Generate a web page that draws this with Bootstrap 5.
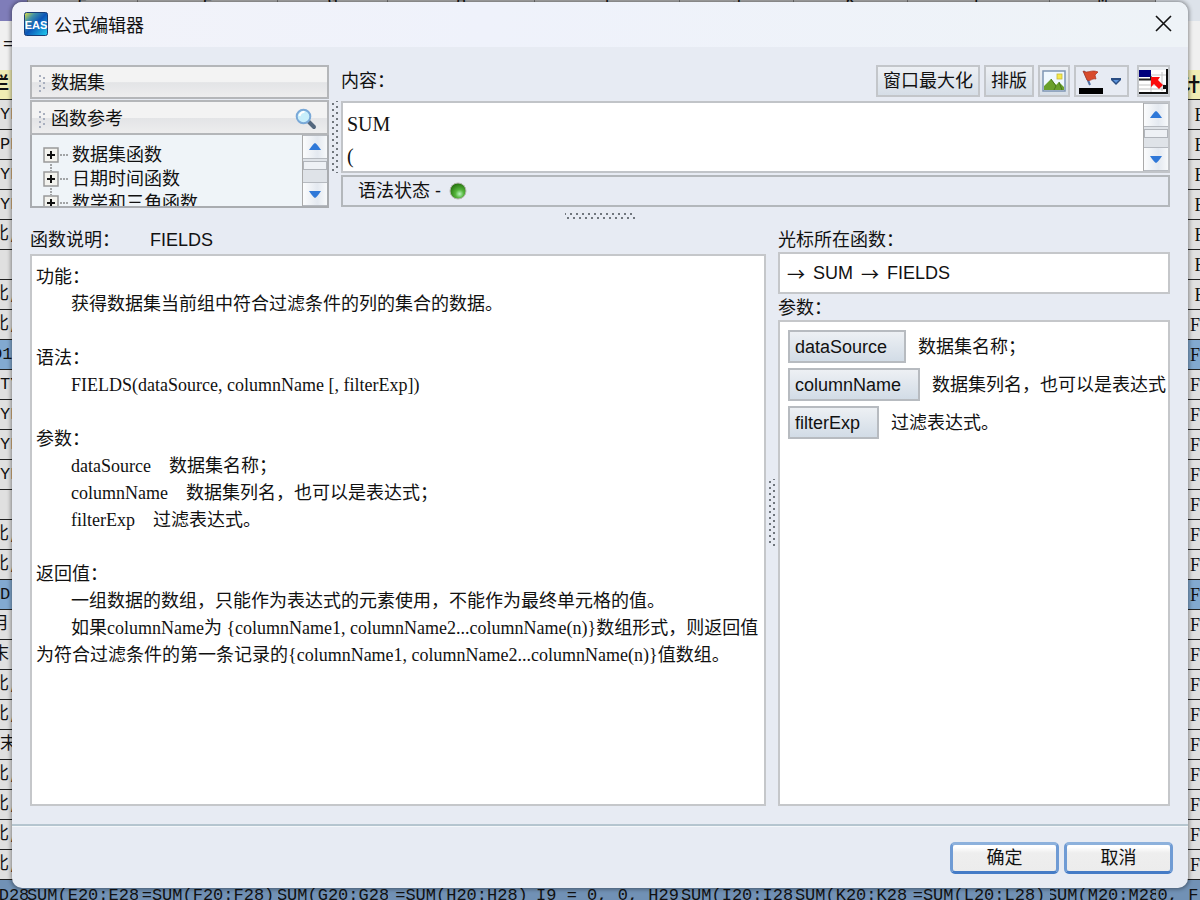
<!DOCTYPE html>
<html lang="zh-CN">
<head>
<meta charset="utf-8">
<meta name="viewport" content="width=device-width, initial-scale=1">
<title>公式编辑器</title>
<link href="https://cdn.jsdelivr.net/npm/bootstrap@5.3.0/dist/css/bootstrap.min.css" rel="stylesheet">
<style>
  :root { --ui: "Liberation Sans", "Noto Sans CJK SC", sans-serif; --doc: "Liberation Serif", "Noto Sans CJK SC", serif; --edge: #c1c4c8; --edge-dark: #a9acb0; --face: #e7ebf3; }
  body { font-family: var(--ui); font-size: 18px; line-height: 24px; color: #111; background: #dedede; }
  button { font: inherit; color: inherit; }

  /* worksheet behind the dialog */
  .sheet { inset: 0; font-family: "Liberation Mono", "Noto Sans CJK SC", monospace; font-size: 17px; line-height: 30px; }
  .sheet > div { flex-shrink: 0; }
  .sheet-cols { display: grid; grid-template-columns: 28px 110px 140px 110px 147px 145px 114px 114px 142px 106px 1fr; }
  .sheet-cols > div { display: flex; justify-content: center; overflow: hidden; white-space: pre; min-width: 0; }
  .sheet-head { height: 21px; background: #b4b4b4; border-bottom: 1px solid #777; }
  .sheet-head > div { border-right: 1px solid #777; line-height: 8px; height: 21px; padding-bottom: 16px; align-items: flex-end; }
  .sheet-head > div:first-child { background: #7f7db9; }
  .sheet-head > div:last-child { background: #dde3ea; border: 0; }
  .sheet-formula { height: 49px; background: #f0f0f0; line-height: 48px; padding-left: 3px; }
  .strip { width: 14px; }
  .strip > div { height: 30px; border-bottom: 1px solid #222; background: #e0e0e0; overflow: hidden; white-space: pre; }
  .strip > .key { background: #f1edb4; font-weight: bold; }
  .strip > .sel, .sheet-foot { background: #82a9d0; }
  .strip .half { text-indent: -8px; }
  .strip-r { font-family: "Liberation Serif", "Noto Sans CJK SC", serif; font-size: 18px; }
  .strip-r > div { padding-left: 4px; }
  .sheet-foot { height: 30px; line-height: 32px; background: #7191b5; }

  /* dialog */
  .dlg { inset: 2px 12px 12px; background: var(--face); border-radius: 10px; box-shadow: 0 0 4px 1px rgba(0,0,0,.42); overflow: hidden; }
  .dlg-title { height: 45px; padding: 0 16px 2px 12px; gap: 6px; background: linear-gradient(90deg, #f2f3f9, #eff2fb 40%, #eef3f7); }
  .dlg-title h1 { font: 18px/24px "Noto Sans CJK SC", sans-serif; }
  .plain { border: 0; background: none; padding: 0; display: flex; }
  .dlg-main { padding: 18px 18px 18px; }
  .side { width: 299px; }
  .fold { height: 34px; border: 2px solid #b4b6b9; background: linear-gradient(#f3f3f3 50%, #e3e4e6 52%, #ededee); padding: 2px 10px 0 6px; text-align: left; }
  .fold + .fold { margin-top: 1px; height: 35px; }
  .tree-box { border: 2px solid var(--edge-dark); border-top: 0; background: #eff4f8; height: 73px; overflow: hidden; }
  .tree { padding: 8px 0 0 11px; }
  .tree li { height: 24px; white-space: nowrap; }
  .tree li svg { flex: none; overflow: visible; }
  .bar { width: 25px; border-left: 1px solid #aaa; background: #dfe3e8; flex: none; }
  .bar button { height: 24px; border: 1px solid #b6bac0; border-width: 1px 0; background: linear-gradient(90deg, #fbfcfd, #e4e9f0 60%, #f7f9fb); align-items: center; justify-content: center; }
  .bar .thumb { height: 9px; margin-top: 2px; border: 1px solid #b1b5bb; background: #eef1f5; }
  .dots-v { width: 8px; margin: auto 2px; background: radial-gradient(circle, #70767d 1px, transparent 1px) 0 0/4px 6px, radial-gradient(circle, #70767d 1px, transparent 1px) 4px 3px/4px 6px; background-repeat: repeat-y; }
  .dots-h { height: 8px; width: 70px; background: radial-gradient(circle, #70767d 1px, transparent 1px) 3px 0/6px 4px, radial-gradient(circle, #70767d 1px, transparent 1px) 0 4px/6px 4px; background-repeat: repeat-x; }
  .tool { height: 32px; border: 2px solid #c3c6ca; background: linear-gradient(#edf0f4, #d6dee7); padding: 0 5px; display: flex; align-items: center; }
  .tool.pic { padding: 0 2px; }
  .tool.flat { background: var(--face); }
  .edit-box { height: 72px; border: 2px solid var(--edge); background: #fff; }
  .edit-box textarea { border: 0; outline: 0; resize: none; overflow: hidden; padding: 5px 4px 0; font: 20px/32px var(--doc); color: #111; height: 68px; }
  .status { height: 32px; border: 2px solid #b3b7bb; padding-left: 15px; margin-top: 2px; }
  .well { border: 2px solid #c5c7ca; background: #fff; }
  .doc { font-family: var(--doc); line-height: 27px; padding: 8px 4px; white-space: pre-wrap; overflow: hidden; }
  .doc dt { font-weight: normal; }
  .doc dd { margin: 0 0 27px; padding-left: 35px; white-space: pre; }
  .doc .outdent { margin-left: -35px; }
  .pane-r { width: 392px; flex: none; }
  .pane-label { padding: 8px 0 2px; }
  .trail { height: 42px; padding: 0 7px; gap: 8px; }
  .trail i { font-family: "Noto Sans CJK SC", sans-serif; font-style: normal; }
  .args-label { padding: 2px 0 0; }
  .args { padding: 8px 0 0 8px; overflow: hidden; }
  .args li { display: flex; align-items: center; gap: 12px; height: 33px; margin-bottom: 5px; white-space: nowrap; }
  .args button { height: 33px; border: 2px solid #b7bbc0; background: linear-gradient(#edf0f4, #d2dce6); padding: 0 17px 0 5px; flex: none; }
  .dlg-foot { height: 64px; border-top: 2px solid #b5c5cf; box-shadow: inset 0 1px #f4f7fa; padding: 2px 15px 0; gap: 5px; }
  .dlg-foot button { width: 109px; height: 32px; border: 3px solid; border-color: #8db1dc #6f9bd4 #447bc6 #6f9bd4; border-radius: 5px; background: linear-gradient(#fff 2px, #eee 8px, #ececec); padding: 0; }
</style>
</head>
<body class="vh-100 position-relative overflow-hidden">

<div class="sheet position-absolute d-flex flex-column overflow-hidden" aria-hidden="true">
  <div class="sheet-head sheet-cols"><div></div><div>E</div><div>F</div><div>G</div><div>H</div><div>I</div><div>J</div><div>K</div><div>L</div><div>M</div><div></div></div>
  <div class="sheet-formula">=</div>
  <div class="d-flex justify-content-between">
    <div class="strip">
      <div class="key half">栏</div>
      <div>YF</div><div>PF</div><div>YF</div><div>YF</div><div class="half">比,</div><div> .</div><div class="half">比,</div><div class="half">比,</div>
      <div class="sel half">D1</div><div>TY</div><div>YF</div><div>YF</div><div>YF</div><div> .</div><div class="half">比,</div><div class="half">比,</div>
      <div class="sel">D</div><div class="half">月</div><div class="half">末</div><div class="half">比,</div><div class="half">比,</div><div>末</div><div class="half">比,</div><div class="half">比,</div><div class="half">比,</div><div class="half">比,</div>
    </div>
    <div class="strip strip-r">
      <div class="key half">计</div>
      <div> F</div><div> F</div><div> F</div><div> F</div><div> F</div><div> F</div><div> F</div><div>F</div>
      <div class="sel">F</div><div>F</div><div>F</div><div>F</div><div>F</div><div>F</div><div>F</div><div>F</div>
      <div class="sel">F</div><div>F</div><div>F</div><div>F</div><div>F</div><div>F</div><div>F</div><div>F</div><div>F</div><div>F</div>
    </div>
  </div>
  <div class="sheet-foot sheet-cols"><div>D28</div><div>=SUM(E20:E28)</div><div>=SUM(F20:F28)</div><div>=SUM(G20:G28)</div><div>=SUM(H20:H28)</div><div>I9 = 0, 0, H29</div><div>=SUM(I20:I28)</div><div>=SUM(K20:K28)</div><div>=SUM(L20:L28)</div><div>=SUM(M20:M28)</div><div>0, F</div></div>
</div>

<main class="dlg position-absolute d-flex flex-column" role="dialog" aria-labelledby="dlg-name">
  <header class="dlg-title d-flex align-items-center">
    <svg width="24" height="24" viewBox="0 0 24 24" aria-hidden="true">
      <defs><linearGradient id="lg" x1="0" y1="0" x2="1" y2="1"><stop offset="0" stop-color="#e8e337"/><stop offset=".25" stop-color="#3e8fa8"/><stop offset=".5" stop-color="#0c55b8"/><stop offset="1" stop-color="#20d0f0"/></linearGradient></defs>
      <rect x=".5" y=".5" width="23" height="23" rx="2" fill="url(#lg)" stroke="#173d78"/>
      <text x="12" y="17" text-anchor="middle" font-family="Liberation Sans, sans-serif" font-size="11" font-weight="bold" fill="#fff">EAS</text>
    </svg>
    <h1 id="dlg-name" class="m-0 flex-grow-1">公式编辑器</h1>
    <button class="plain" type="button" aria-label="关闭"><svg width="17" height="17" viewBox="0 0 17 17"><path d="M1 1 16 16M16 1 1 16" stroke="#111" stroke-width="1.6"/></svg></button>
  </header>

  <div class="dlg-main d-flex flex-column flex-grow-1">
    <section class="d-flex">
      <div class="side d-flex flex-column">
        <button class="fold d-flex align-items-center gap-1" type="button">
          <svg width="9" height="18" viewBox="0 0 9 18"><path d="M2 1v17M6 3v15" stroke="#a8afbe" stroke-width="2" stroke-dasharray="2 3"/></svg><span>数据集</span></button>
        <button class="fold d-flex align-items-center gap-1" type="button">
          <svg width="9" height="18" viewBox="0 0 9 18"><path d="M2 1v17M6 3v15" stroke="#a8afbe" stroke-width="2" stroke-dasharray="2 3"/></svg><span class="flex-grow-1">函数参考</span>
          <svg width="22" height="22" viewBox="0 0 22 22"><path d="m13.500 13.500 5.500 5.500" stroke="#53677d" stroke-width="4" stroke-linecap="round"/><circle cx="8.500" cy="8.500" r="6.800" fill="#c8eefb" stroke="#7aa9d8" stroke-width="2"/><path d="M4.500 8c.5-3 3-4.500 5-4" stroke="#fff" stroke-width="2" fill="none"/></svg></button>
        <div class="tree-box d-flex">
          <ul class="tree list-unstyled m-0 flex-grow-1">
            <li class="d-flex align-items-center gap-1"><button class="plain" type="button" aria-label="展开"><svg width="25" height="16" viewBox="0 0 25 16"><rect x="1" y="1" width="14" height="14" fill="#f3f3ee" stroke="#999" stroke-width="1.500"/><path d="M4 8h8M8 4v8" stroke="#111" stroke-width="2"/><path d="M17 8h8M8 17v7" stroke="#555" stroke-dasharray="2 1"/></svg></button>数据集函数</li>
            <li class="d-flex align-items-center gap-1"><button class="plain" type="button" aria-label="展开"><svg width="25" height="16" viewBox="0 0 25 16"><rect x="1" y="1" width="14" height="14" fill="#f3f3ee" stroke="#999" stroke-width="1.500"/><path d="M4 8h8M8 4v8" stroke="#111" stroke-width="2"/><path d="M17 8h8M8 17v7" stroke="#555" stroke-dasharray="2 1"/></svg></button>日期时间函数</li>
            <li class="d-flex align-items-center gap-1"><button class="plain" type="button" aria-label="展开"><svg width="25" height="16" viewBox="0 0 25 16"><rect x="1" y="1" width="14" height="14" fill="#f3f3ee" stroke="#999" stroke-width="1.500"/><path d="M4 8h8M8 4v8" stroke="#111" stroke-width="2"/><path d="M17 8h8" stroke="#555" stroke-dasharray="2 1"/></svg></button>数学和三角函数</li>
          </ul>
          <div class="bar d-flex flex-column">
            <button class="plain" type="button" aria-label="向上"><svg width="14" height="8" viewBox="0 0 14 8"><path d="M7 0q2 1 6 7H1Q5 1 7 0z" fill="#2f78d8"/></svg></button>
            <div class="thumb mb-auto"></div>
            <button class="plain" type="button" aria-label="向下"><svg width="14" height="8" viewBox="0 0 14 8"><path d="M7 8Q9 7 13 1H1q4 6 6 7z" fill="#2f78d8"/></svg></button>
          </div>
        </div>
      </div>

      <div class="dots-v" style="height:72px"></div>

      <div class="flex-grow-1">
        <div class="d-flex align-items-start gap-1 mb-1">
          <label for="formula" class="me-auto pt-1">内容：</label>
          <button class="tool" type="button">窗口最大化</button>
          <button class="tool" type="button">排版</button>
          <button class="tool pic" type="button" aria-label="图片"><svg width="24" height="22" viewBox="0 0 24 22"><rect x="1" y="1" width="22" height="20" fill="#eff8ff" stroke="#7e95b4" stroke-width="1.500"/><rect x="15" y="4" width="5" height="5" fill="#f5e94a" stroke="#c6b93a" stroke-width=".8"/><path d="M2 20v-4l7-7 5 6 3-3 5 5v3z" fill="#69a02b"/><path d="m9 9 5 7-2 4M17 12l3 8" stroke="#47751b" fill="none"/></svg></button>
          <button class="tool pic flat gap-2" type="button" aria-label="标记颜色"><svg width="25" height="25" viewBox="0 0 25 25"><path d="m6 2 6 14" stroke="#5270a3" stroke-width="2"/><path d="M5 2c5 3 8-2 15 1l-3 3 1 4c-4-1-6 3-9 1z" fill="#d84b2c" stroke="#a8341f" stroke-width=".7"/><path d="M1 19h24v6H1z" fill="#000"/></svg><svg class="me-1" width="10" height="7" viewBox="0 0 10 7"><path d="M0 0h10v2L5 7 0 2z" fill="#294d83"/><path d="M2 2h6L5 5z" fill="#5c94dc"/></svg></button>
          <button class="tool ms-1 px-0" type="button" aria-label="选择单元格"><svg width="29" height="26" viewBox="0 0 29 26"><path d="M0 2h29v23H0z" fill="#fff"/><path d="M0 17h26M0 21h26M12 6v18M23 4v19M13 7h15" stroke="#c5c5c5"/><path d="M0 2h12v7H0z" fill="#00007c"/><path d="M0 11.500h12v-3" stroke="#222" stroke-width="2" fill="none"/><path d="M28 1v24H0" stroke="#111" stroke-width="2" fill="none"/><path d="M12 9h9l-2 3 5 5-4 4-5-5-3 3z" fill="#fb0c0c"/><path d="M24 17h4v4h-4z" fill="#111"/></svg></button>
        </div>
        <div class="edit-box d-flex">
          <textarea id="formula" class="flex-grow-1" spellcheck="false">SUM
(</textarea>
          <div class="bar d-flex flex-column">
            <button class="plain" type="button" aria-label="向上"><svg width="14" height="8" viewBox="0 0 14 8"><path d="M7 0q2 1 6 7H1Q5 1 7 0z" fill="#2f78d8"/></svg></button>
            <div class="thumb mb-auto"></div>
            <button class="plain" type="button" aria-label="向下"><svg width="14" height="8" viewBox="0 0 14 8"><path d="M7 8Q9 7 13 1H1q4 6 6 7z" fill="#2f78d8"/></svg></button>
          </div>
        </div>
        <div class="status d-flex align-items-center gap-2"><span>语法状态 -</span>
          <svg width="18" height="18" viewBox="0 0 18 18"><defs><radialGradient id="ok" cx=".6" cy=".68" r=".65"><stop offset="0" stop-color="#b8f4bd"/><stop offset=".4" stop-color="#55b53c"/><stop offset="1" stop-color="#287510"/></radialGradient></defs><circle cx="9" cy="9" r="8" fill="url(#ok)" stroke="#b5b5b0"/></svg>
        </div>
      </div>
    </section>

    <div class="dots-h mx-auto mt-1"></div>

    <section class="d-flex flex-grow-1">
      <div class="d-flex flex-column flex-grow-1">
        <div class="d-flex pane-label" style="gap:30px"><span>函数说明：</span><span>FIELDS</span></div>
        <dl class="doc well flex-grow-1 m-0"><dt>功能：</dt><dd>获得数据集当前组中符合过滤条件的列的集合的数据。</dd><dt>语法：</dt><dd>FIELDS(dataSource, columnName [, filterExp])</dd><dt>参数：</dt><dd>dataSource　数据集名称；
columnName　数据集列名，也可以是表达式；
filterExp　过滤表达式。</dd><dt>返回值：</dt><dd>一组数据的数组，只能作为表达式的元素使用，不能作为最终单元格的值。
如果columnName为 {columnName1, columnName2...columnName(n)}数组形式，则返回值
<span class="outdent">为符合过滤条件的第一条记录的{columnName1, columnName2...columnName(n)}值数组。</span></dd></dl>
      </div>
      <div class="dots-v" style="height:68px"></div>
      <div class="pane-r d-flex flex-column">
        <div class="pane-label pb-0">光标所在函数：</div>
        <div class="trail well d-flex align-items-center"><i>→</i><span>SUM</span><i>→</i><span>FIELDS</span></div>
        <div class="args-label">参数：</div>
        <ul class="args well list-unstyled m-0 flex-grow-1">
          <li><button type="button">dataSource</button>数据集名称；</li>
          <li><button type="button">columnName</button>数据集列名，也可以是表达式；</li>
          <li><button type="button">filterExp</button>过滤表达式。</li>
        </ul>
      </div>
    </section>
  </div>

  <footer class="dlg-foot d-flex align-items-center justify-content-end">
    <button type="button">确定</button>
    <button type="button">取消</button>
  </footer>
</main>

<script src="https://cdn.jsdelivr.net/npm/bootstrap@5.3.0/dist/js/bootstrap.bundle.min.js"></script>
</body>
</html>
